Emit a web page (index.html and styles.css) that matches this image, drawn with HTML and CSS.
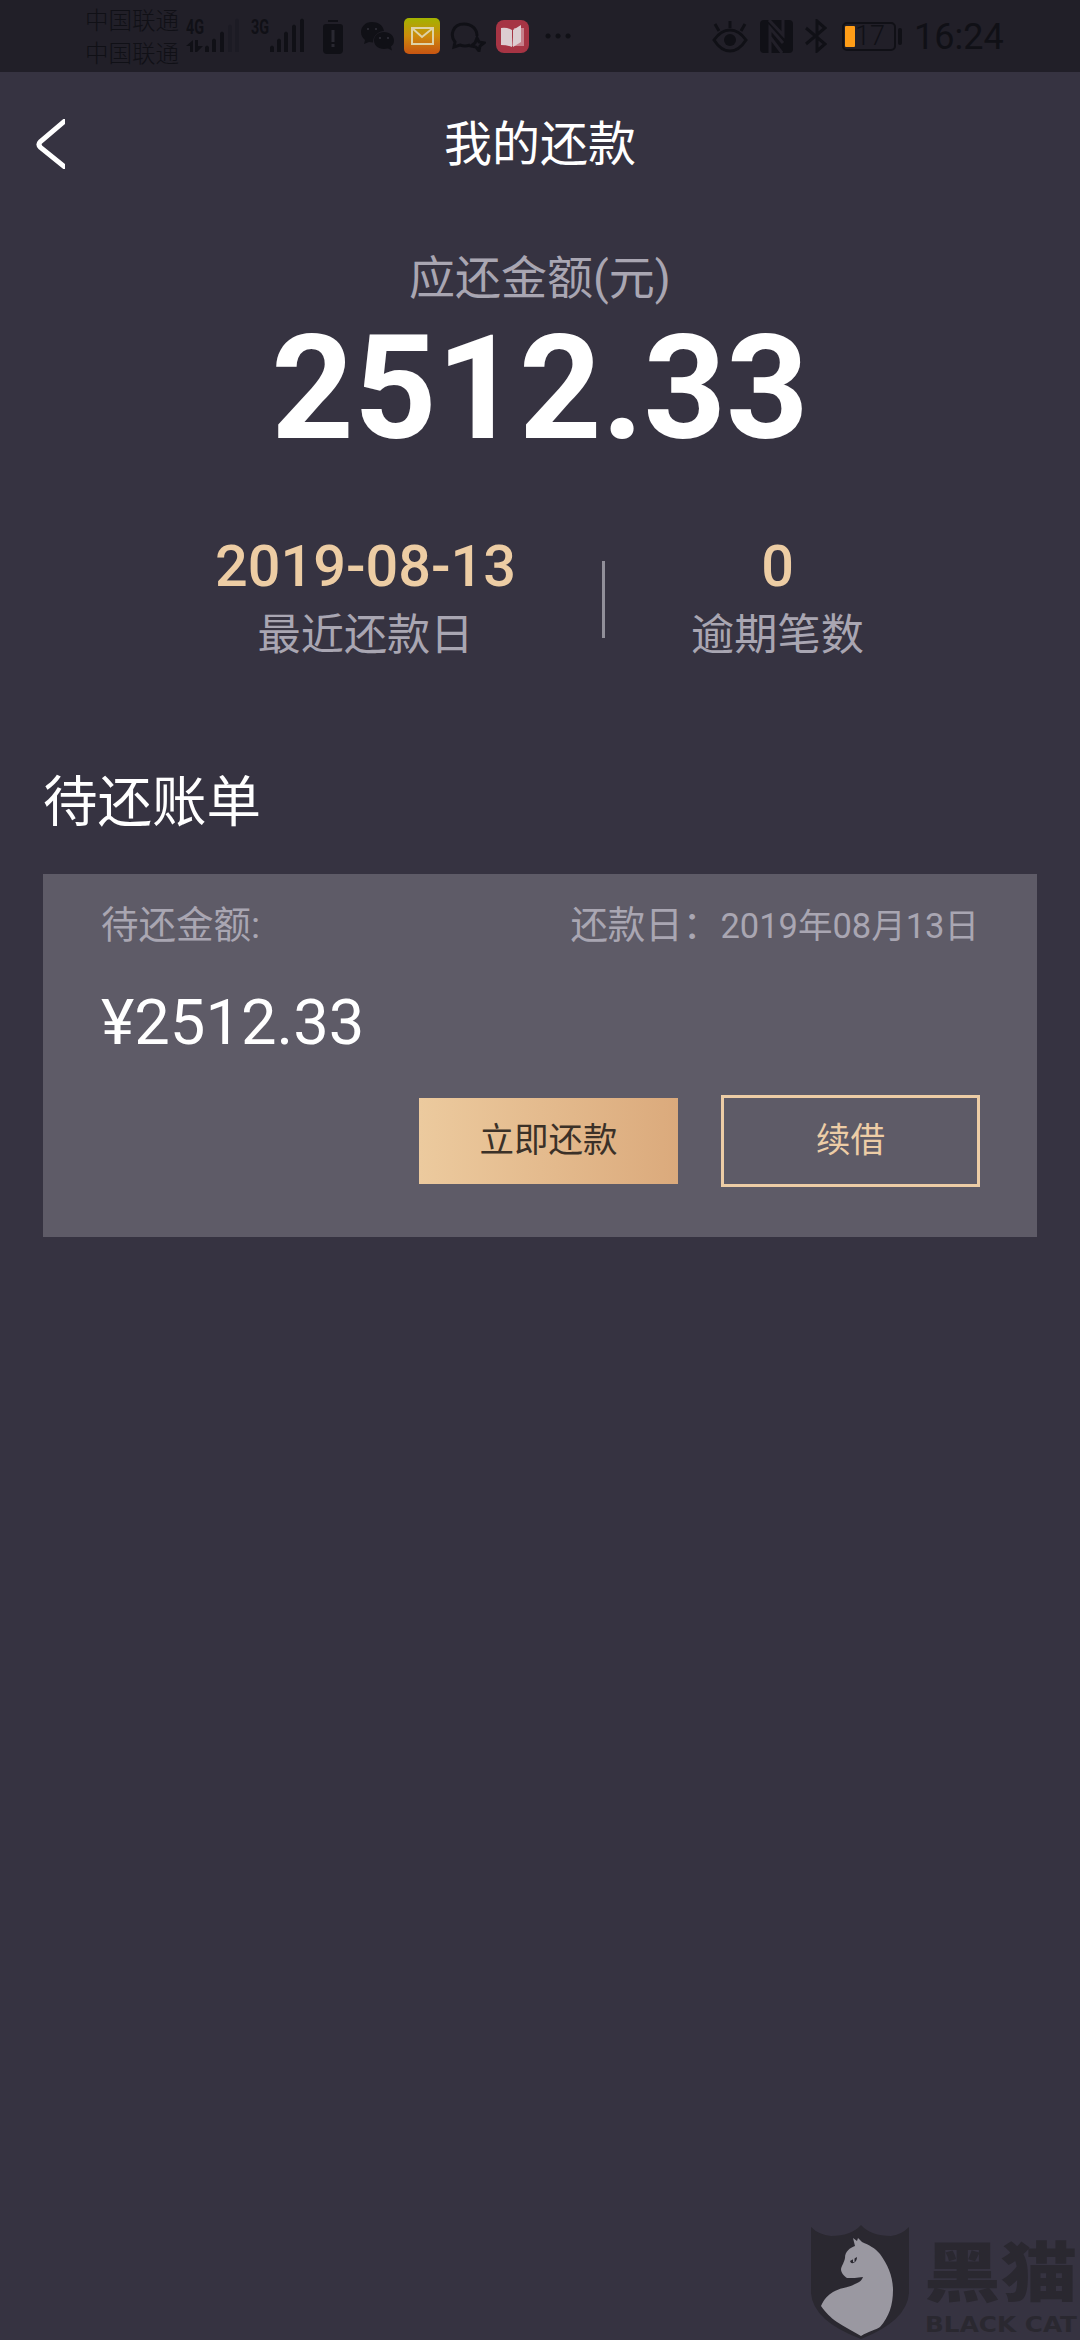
FILE: index.html
```html
<!DOCTYPE html>
<html lang="zh-CN">
<head>
<meta charset="utf-8">
<title>我的还款</title>
<link rel="stylesheet" href="styles.css">
</head>
<body>
<div class="screen">
  <div class="status">
    <div class="carriers"><span>中国联通</span><span>中国联通</span></div>
    <svg class="signal" width="120" height="36" viewBox="0 0 120 36">
      <g class="net"><text x="0" y="15.500" textLength="18" lengthAdjust="spacingAndGlyphs">4G</text><text x="65" y="15.500" textLength="18" lengthAdjust="spacingAndGlyphs">3G</text></g>
      <path class="ink" d="M7 22v12H4v-6H0zM9 22v12h2l6-6h-5v-6zM19 29q2-3 4 0v5h-4zM26 22q2-3 4 0v12h-4zM34 15q2-3 4 0v19h-4z"/>
      <path class="faint" d="M42 8q2-3 4 0v26h-4zM49 2q2-3 4 0v32h-4z"/>
      <path class="ink" d="M84 29q2-3 4 0v5h-4zM91 22q2-3 4 0v12h-4zM98 15q2-3 4 0v19h-4zM106 8q2-3 4 0v26h-4zM114 2q2-3 4 0v32h-4z"/>
    </svg>
    <svg class="alert" width="20" height="34" viewBox="0 0 20 34">
      <path class="ink" d="M5 0h10v2H5zM3 4h14q3 0 3 3v23q0 4-4 4H4q-4 0-4-4V7q0-3 3-3z"/>
      <path class="cut" d="M8.500 10h3v12h-3zM8.500 24h3v3h-3z"/>
    </svg>
    <svg class="wechat" width="34" height="30" viewBox="0 0 34 30">
      <path class="ink" d="M11 0C4 0 0 5 0 10c0 4 2 6 4 8l-1 4 5-2 4 .5C12 13 18 9 23 9 22 3 17 0 11 0z"/>
      <path class="ink" d="M23 10c-6 0-10 4-10 8.500S17 27 23 27l4-.6 4 2-1-4c2-1.500 3-3.500 3-6 0-4.500-4-8.400-10-8.400z"/>
      <path class="cut" d="M6 6h2v2H6zM14 6h2v2h-2zM18 15h2v2h-2zM26 15h2v2h-2z"/>
    </svg>
    <svg class="mail" width="36" height="36" viewBox="0 0 36 36">
      <defs><linearGradient id="sun" x2="0" y2="1"><stop stop-color="#a3b300"/><stop offset=".5" stop-color="#cd8b0c"/><stop offset="1" stop-color="#c75412"/></linearGradient></defs>
      <rect width="36" height="36" rx="5" fill="url(#sun)"/>
      <path d="M8 10h21v16H8zM8 10l10 9 11-9" fill="none" stroke="#ded2a6" stroke-width="2"/>
    </svg>
    <svg class="bubble" width="36" height="30" viewBox="0 0 36 30">
      <path class="line" d="M20 23q-5 2-10 0l-6 2 1-5C0 14 2 2 14 2c8 0 13 5 13 12"/>
      <path class="line" d="M27 16l2 4 5 1-4 3-1 5-3-4-5-1 4-3z"/>
    </svg>
    <svg class="book" width="33" height="33" viewBox="0 0 33 33">
      <rect width="33" height="33" rx="8" fill="#a63444"/>
      <path d="M18 8h10v18H16z" fill="#c7808b"/>
      <path d="M5 8q6-1 11 2v17q-5-2-11-2zM17 10l8-5v17l-8 5z" fill="#dccdd1"/>
    </svg>
    <svg class="dots" width="26" height="6" viewBox="0 0 26 6"><path class="ink" d="M3 .5a2.500 2.500 0 1 0 .1 0zM13 .5a2.500 2.500 0 1 0 .1 0zM23 .5a2.500 2.500 0 1 0 .1 0z"/></svg>
    <svg class="eye" width="36" height="32" viewBox="0 0 36 32">
      <path class="line" d="M2 19Q9 9 18 9t16 10q-7 11-16 11T2 19zM18 7V0M7 10L3 3M29 10l4-7"/>
      <circle class="ink" cx="18" cy="19" r="6"/>
    </svg>
    <svg class="nfc" width="33" height="33" viewBox="0 0 33 33">
      <rect class="ink" width="33" height="33" rx="4"/>
      <path class="slit" d="M10 33V8l13 15M9 0l14 15v-15M10 17l12 16"/>
    </svg>
    <svg class="bt" width="22" height="34" viewBox="0 0 22 34"><path class="line" d="M1 9l19 16-8 7V2l8 7L1 25"/></svg>
    <div class="battery"><span class="charge"></span><span class="level">17</span></div>
    <span class="tip"></span>
    <span class="clock">16:24</span>
  </div>

  <div class="nav">
    <svg class="back" width="29" height="50" viewBox="0 0 29 50"><path d="M30 1L4.500 22.500q-3 3 0 6L30 49"/></svg>
    <h1>我的还款</h1>
  </div>

  <div class="summary">
    <div class="due-label">应还金额(元)</div>
    <div class="due">2512.33</div>
    <div class="stats">
      <div class="stat date"><b>2019-08-13</b><span>最近还款日</span></div>
      <i class="rule"></i>
      <div class="stat count"><b>0</b><span>逾期笔数</span></div>
    </div>
  </div>

  <h2>待还账单</h2>
  <div class="card">
    <div class="row"><span>待还金额:</span><span>还款日：<small>2019年08月13日</small></span></div>
    <div class="amount">¥2512.33</div>
    <div class="actions"><div class="btn primary">立即还款</div><div class="btn outline">续借</div></div>
  </div>

  <div class="watermark">
    <svg width="269" height="115" viewBox="0 0 269 115">
      <path class="dark" d="M0 2q8 8 20 9 20 0 30-11 10 11 30 11 10-1 18-9v66q-2 28-48 46Q2 96 0 68z"/>
      <path class="cat" d="M42 13l4 3 1-3 4 4c7 3 13 6 18 12 8 11 13 23 13 36 0 15-4 27-13 37-4 3-11 4-19 9-8-5-17-9-24-14S15 88 10 81c3-7 7-11 12-14 9-5 15-4 22-8 5-2 7-4 8-7-6 1-11 1-16 1-3-2-6-5-6-9 1-4 3-6 4-11 0-7 5-10 10-12z"/>
      <path class="dark" d="M39 36l7-4q0 5-4 6-2 1-3-2z"/>
      <path class="cat" d="M42 33h1.500v4H42z"/>
      <text class="hei" transform="translate(113 71) scale(1.080 .92)">黑猫</text>
      <text class="latin" x="114" y="107" textLength="152" lengthAdjust="spacingAndGlyphs">BLACK CAT</text>
    </svg>
  </div>
</div>
</body>
</html>
```
FILE: styles.css
```css
* { box-sizing: border-box; }
body { margin: 0; background: #363341; font-family: Roboto, "Noto Sans CJK SC", sans-serif; }
.screen { position: relative; width: 1080px; height: 2340px; overflow: hidden; }
svg { display: block; flex: none; }
h1, h2 { margin: 0; font-weight: 400; color: #fff; }

.status { display: flex; align-items: flex-start; height: 72px; padding-left: 85px; background: #211f28; color: #101016; }
.carriers { display: flex; flex-direction: column; width: 100px; padding-top: 3px; font: 300 23.5px/33px "Noto Sans CJK SC", sans-serif; }
.carriers span { height: 33px; white-space: nowrap; }
.ink { fill: #101016; }
.faint { fill: #1c1b24; }
.cut { fill: #292831; }
.line { fill: none; stroke: #101016; stroke-width: 3; }
.slit { fill: none; stroke: #211f28; stroke-width: 3; }
.net { fill: #101016; font: 700 20px Roboto, sans-serif; }
.signal { margin: 18px 0 0 1px; }
.alert { margin: 20px 0 0 17px; }
.wechat { margin: 22px 0 0 18px; }
.mail { margin: 18px 0 0 9px; }
.bubble { margin: 22px 0 0 10px; }
.book { margin: 20px 0 0 10px; }
.dots { margin: 33px 0 0 16px; }
.eye { margin: 21px 0 0 141px; }
.nfc { margin: 20px 0 0 12px; }
.bt { margin: 19px 0 0 12px; }
.battery { display: flex; align-items: center; width: 54px; height: 29px; margin: 22px 0 0 15px; border: 2px solid #101016; border-radius: 5px; }
.charge { width: 10px; height: 21px; margin-left: 1px; border-radius: 1px; background: #ff9d17; }
.level { font: 300 27px/27px Roboto, sans-serif; }
.tip { width: 4px; height: 17px; margin: 28px 0 0 2px; border-radius: 2px; background: #101016; }
.clock { margin: 17px 0 0 12px; font-size: 36px; line-height: 41px; font-weight: 400; }

.nav { display: flex; height: 142px; }
.back { margin: 47px 0 0 36px; }
.back path { fill: none; stroke: #fff; stroke-width: 5; }
.nav h1 { flex: 1; padding-right: 65px; text-align: center; font-size: 48px; line-height: 145px; }

.summary { text-align: center; }
.due-label { height: 110px; font-size: 46px; line-height: 128px; color: #a9a6b2; }
.due { height: 144px; font-size: 144px; line-height: 129px; font-weight: 700; color: #fff; }
.stats { display: flex; height: 288px; padding: 68px 0 0 216px; }
.stat { display: flex; flex-direction: column; align-items: center; color: #a9a6b2; }
.stat b { height: 67px; font-size: 57.600px; line-height: 62px; font-weight: 500; white-space: nowrap; color: #edcda4; }
.stat span { font-size: 43.200px; line-height: 66px; }
.date { width: 299px; }
.count { width: 173px; }
.rule { width: 3px; height: 77px; margin: 25px 86px 0 87px; background: #918f99; }
h2 { height: 118px; padding-left: 43px; font-size: 54.500px; line-height: 93px; }

.card { width: 994px; height: 363px; margin-left: 43px; padding: 0 58px; background: #5e5b67; }
.row { display: flex; justify-content: space-between; height: 102px; color: #a9a6b2; font-size: 37.500px; line-height: 103px; }
.row small { font-size: 34.500px; }
.amount { height: 119px; font-size: 63.300px; line-height: 92px; color: #fff; }
.actions { display: flex; align-items: center; justify-content: flex-end; gap: 43px; height: 92px; margin-right: -1px; }
.btn { width: 259px; height: 86px; text-align: center; font-size: 34.500px; line-height: 84px; }
.primary { background: linear-gradient(90deg, #ecca9e, #dbaa7c); color: #3b3128; }
.outline { height: 92px; border: 3px solid #edcda6; color: #edcda6; }

.watermark { position: absolute; left: 811px; top: 2225px; }
.dark { fill: #2a2830; }
.cat { fill: #9a98a1; }
.watermark text { fill: #2a2830; }
.hei { font: 900 71px "Noto Sans CJK SC", sans-serif; }
.latin { font: 700 22px "DejaVu Sans", sans-serif; }
```
